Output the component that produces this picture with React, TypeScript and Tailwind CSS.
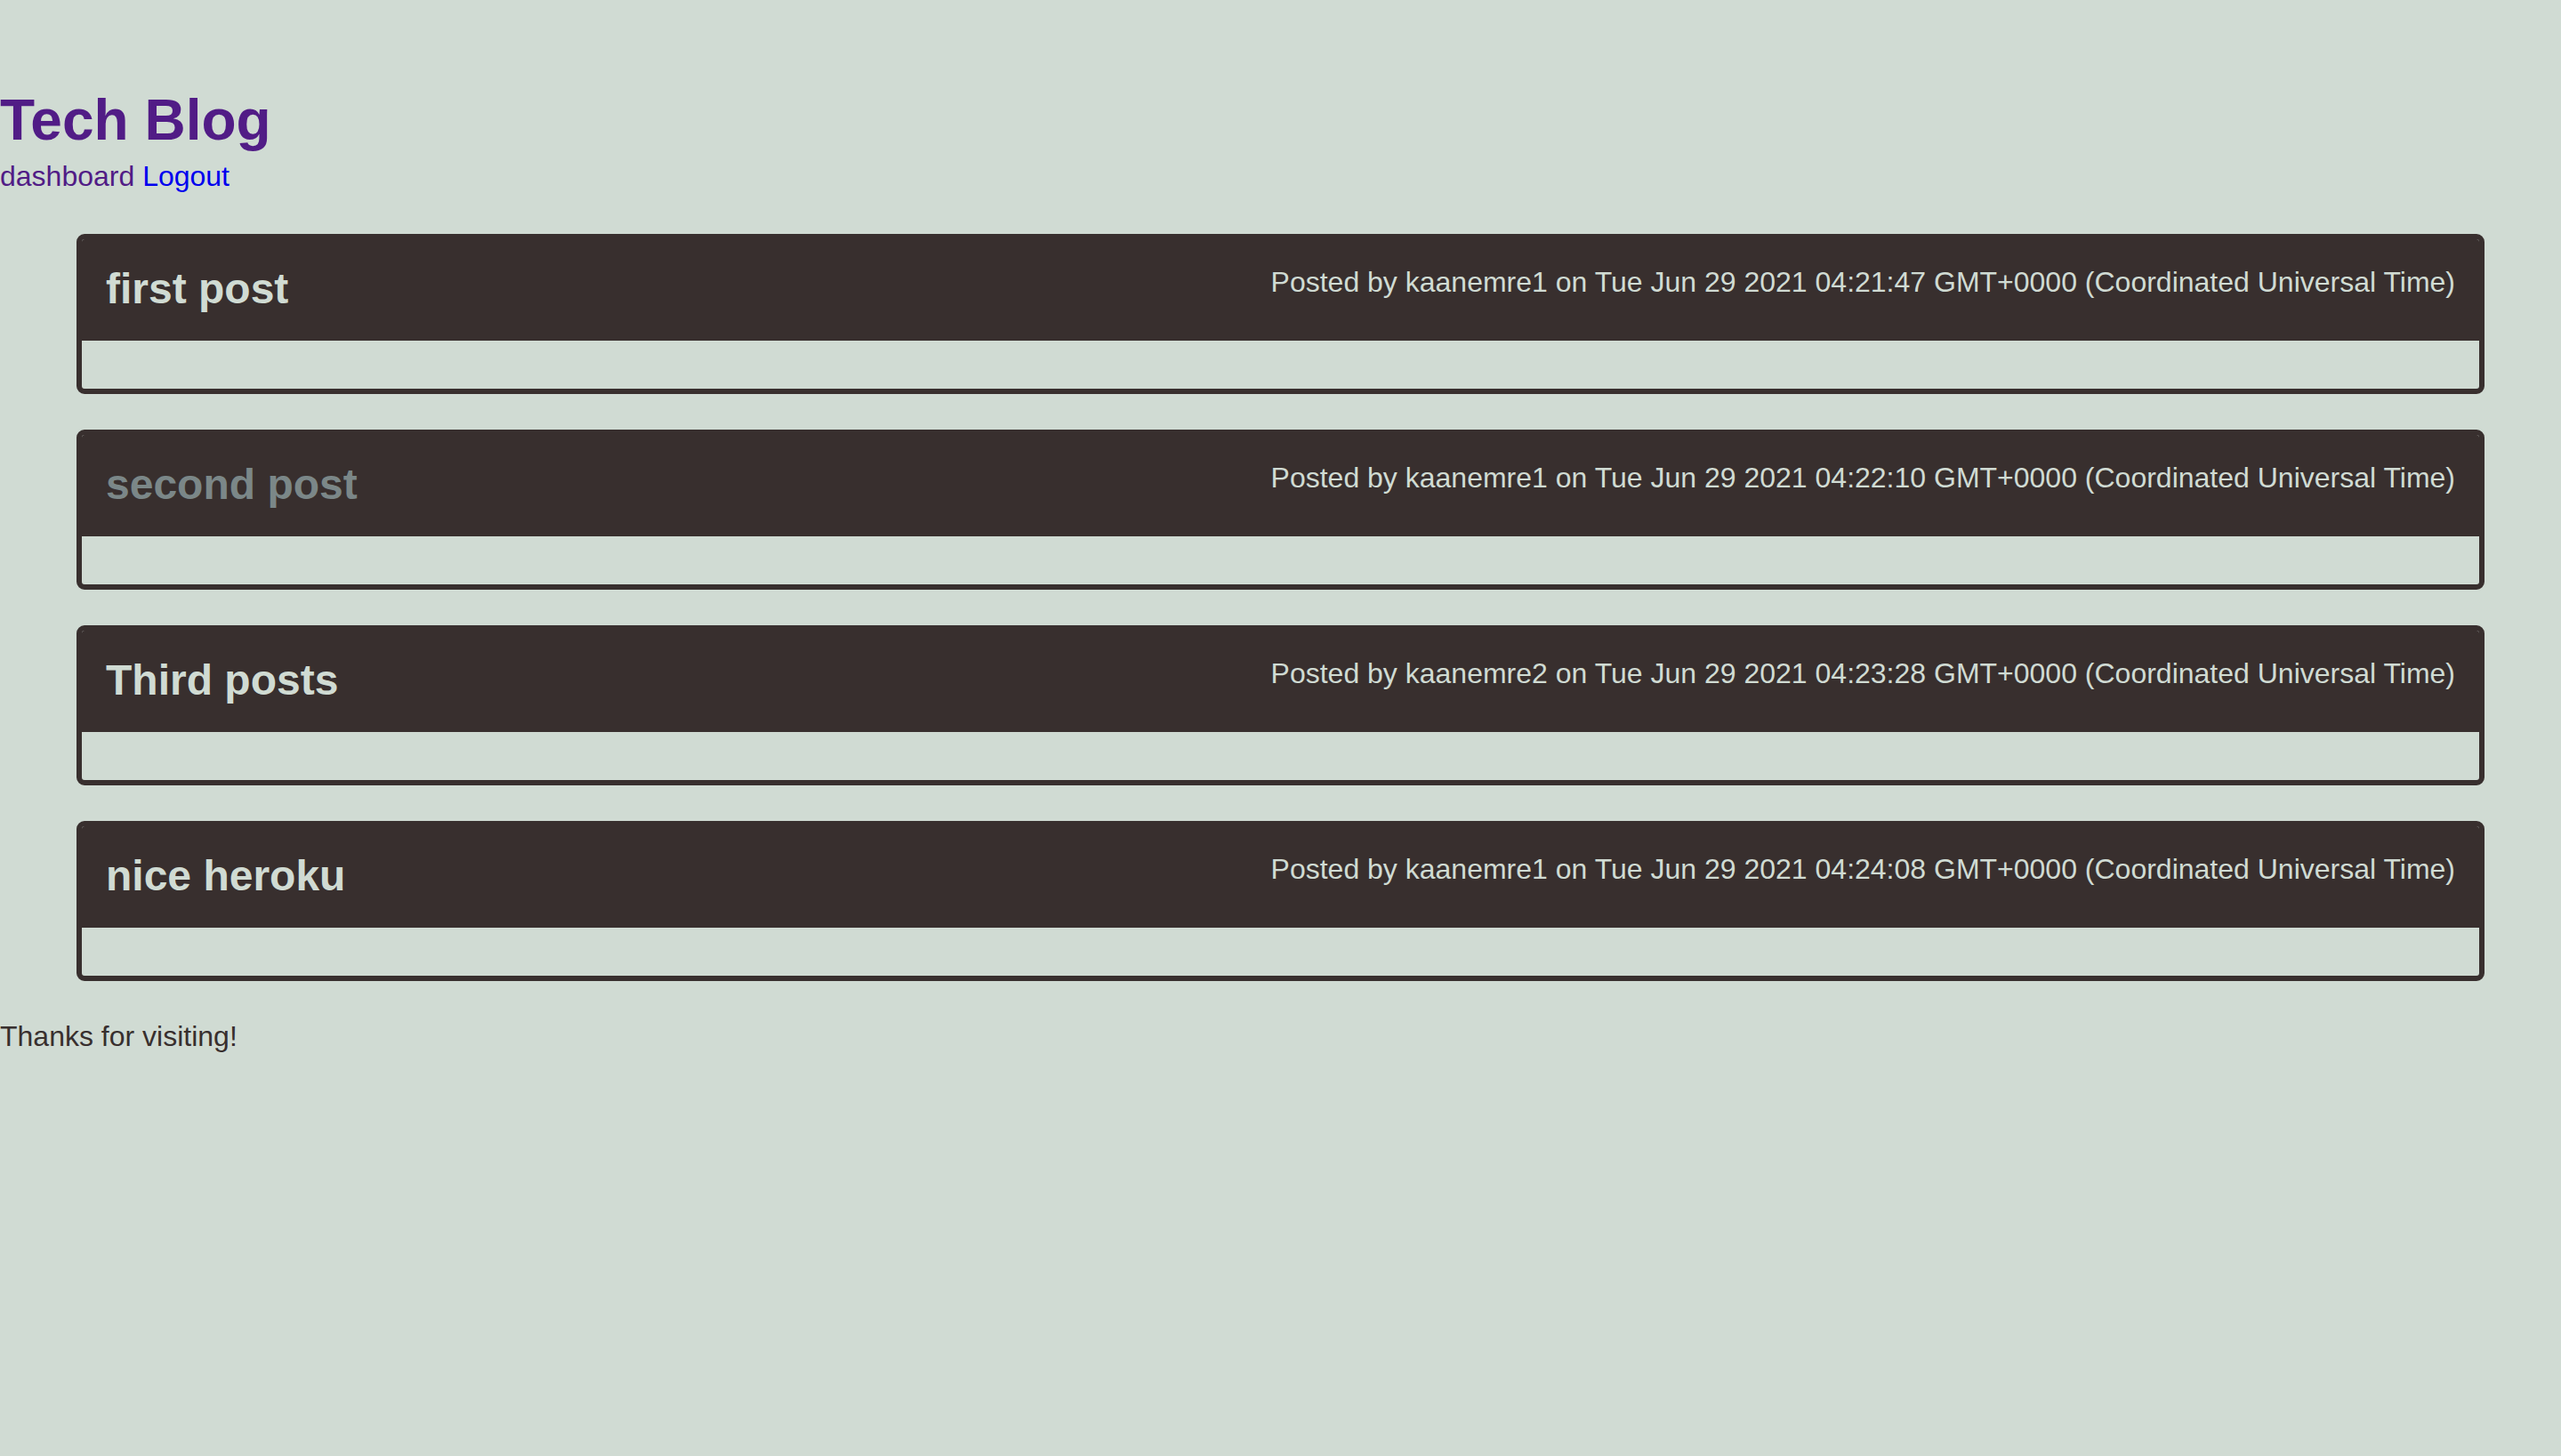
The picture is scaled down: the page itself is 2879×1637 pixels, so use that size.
const posts = [
  {
    title: 'first post',
    author: 'kaanemre1',
    date: 'Tue Jun 29 2021 04:21:47 GMT+0000 (Coordinated Universal Time)',
  },
  {
    title: 'second post',
    author: 'kaanemre1',
    date: 'Tue Jun 29 2021 04:22:10 GMT+0000 (Coordinated Universal Time)',
    muted: true,
  },
  {
    title: 'Third posts',
    author: 'kaanemre2',
    date: 'Tue Jun 29 2021 04:23:28 GMT+0000 (Coordinated Universal Time)',
  },
  {
    title: 'nice heroku',
    author: 'kaanemre1',
    date: 'Tue Jun 29 2021 04:24:08 GMT+0000 (Coordinated Universal Time)',
  },
]

export default function App() {
  return (
    <div className="min-h-screen bg-[#d0dbd3] font-['Liberation_Sans',Arial,sans-serif] text-[32px] leading-[37px] text-[#382f2e]">
      <header className="pt-[98px]">
        <h1 className="text-[64px] font-bold leading-[74px]">
          <a href="#" className="text-[#511c86]">
            Tech Blog
          </a>
        </h1>
        <nav className="mt-[8px]">
          <a href="#" className="text-[#511c86]">
            dashboard
          </a>{' '}
          <a href="#" className="text-[#0000ee]">
            Logout
          </a>
        </nav>
      </header>

      <main className="mx-[86px] mt-[46px] flex flex-col gap-[40px]">
        {posts.map((post) => (
          <article
            key={post.date}
            className="overflow-hidden rounded-[9px] border-[6px] border-[#382f2e]"
          >
            <div className="-mx-px -mt-px flex items-start justify-between bg-[#382f2e] px-[28px] pb-[31px] pt-[29px]">
              <h2
                className={`text-[48px] font-bold leading-[55px] ${
                  post.muted ? 'text-[#7b8788]' : 'text-[#d0dbd3]'
                }`}
              >
                {post.title}
              </h2>
              <p className="mt-[2px] text-[#d0dbd3]">
                Posted by {post.author} on {post.date}
              </p>
            </div>
            <div className="h-[54px]" />
          </article>
        ))}
      </main>

      <footer className="mt-[44px]">Thanks for visiting!</footer>
    </div>
  )
}
